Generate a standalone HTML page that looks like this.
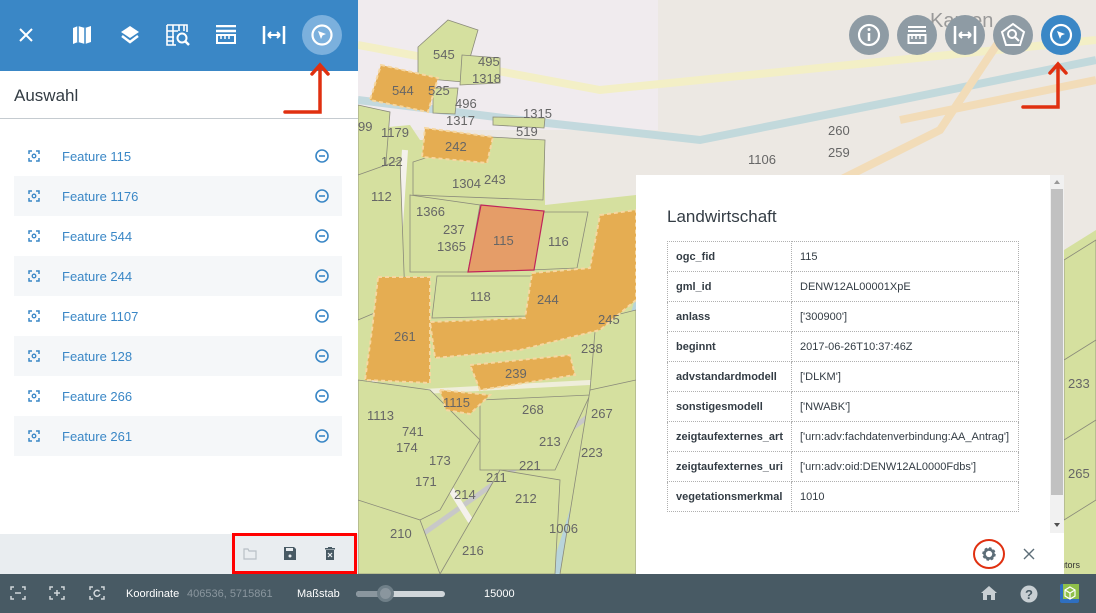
<!DOCTYPE html>
<html><head><meta charset="utf-8"><style>
*{box-sizing:border-box;margin:0;padding:0}
body{width:1096px;height:613px;overflow:hidden;font-family:"Liberation Sans",sans-serif;position:relative;background:#ece8e3}
#map{position:absolute;left:0;top:0}
#panel{position:absolute;left:0;top:0;width:358px;height:574px;background:#fff}
#hdr{height:71px;background:#3a87c6;position:relative}
#hdr svg{position:absolute}
#title{height:48px;border-bottom:1px solid #c5cbd0;font-size:17px;color:#333c44;padding:15px 14px}
.row{position:absolute;left:14px;width:328px;height:40px;font-size:13px;color:#3a87c6}
.row.alt{background:#f5f7f9}
.row span{position:absolute;left:48px;top:13px}
.row svg{position:absolute}
#pbot{position:absolute;left:0;top:534px;width:358px;height:40px;background:#e9edf0}
#redbox{position:absolute;left:232px;top:533px;width:125px;height:41px;border:3px solid #f00}
#foot{position:absolute;left:0;top:574px;width:1096px;height:39px;background:#485a64;color:#fff;font-size:11px}
#foot .t{position:absolute;top:14px}
#popup{position:absolute;left:636px;top:175px;width:428px;height:399px;background:#fff}
#popup h2{position:absolute;left:31px;top:32px;font-size:17px;font-weight:normal;color:#333c44}
table{position:absolute;left:31px;top:66px;border-collapse:collapse;font-size:11px;color:#333c44}
td{border:1px dotted #b0b0b0;height:30px;padding:0 8px}
td:first-child{font-weight:bold;width:124px}
td:last-child{width:227px}
.rb{position:absolute;border-radius:50%;width:40px;height:40px;background:#8e9ba4;top:15px}
</style></head><body>
<svg id="map" width="1096" height="613" viewBox="0 0 1096 613">
<rect width="1096" height="613" fill="#ece8e3"/>
<rect x="358" y="0" width="300" height="130" fill="#f0ebee"/>
<path d="M358 45 L600 90 L700 80 L1096 40" stroke="#f3efc6" stroke-width="8" fill="none"/>
<path d="M358 100 L520 120 L700 140 L900 100 L1096 60" stroke="#b8d4da" stroke-width="8" fill="none" opacity=".8"/>
<path d="M840 180 L940 130 L1000 40 M900 120 L1096 80" stroke="#f2dcb8" stroke-width="8" fill="none"/>
<polygon points="358,130 410,125 420,140 545,140 545,205 636,195 636,574 358,574" fill="#d5e09f"/>
<polygon points="1064,250 1096,230 1096,574 1064,574" fill="#d5e09f"/>
<path d="M640 300 L600 430 L555 574" stroke="#b8d4da" stroke-width="10" fill="none"/>
<path d="M358 580 L640 380" stroke="#c8c8c8" stroke-width="5" fill="none"/>
<path d="M405 150 L395 300 L365 420 M420 440 L470 520 L520 560" stroke="#f4f1ec" stroke-width="6" fill="none"/>
<path d="M358 395 L636 380" stroke="#efeedb" stroke-width="5" fill="none"/>
<!-- green parcels -->
<g fill="#d5e09f" stroke="#8a8a7a" stroke-width="0.8">
<polygon points="448,20 478,30 463,82 418,78 418,47"/>
<polygon points="462,55 500,58 500,83 460,85"/>
<polygon points="433,88 458,88 455,114 433,113"/>
<polygon points="493,117 545,118 544,128 493,125"/>
<polygon points="358,105 390,112 385,175 358,180"/>
<polygon points="490,137 545,140 543,200 413,195 413,162"/>
<polygon points="358,175 400,160 405,300 358,320"/>
<polygon points="410,195 480,205 468,272 410,272"/>
<polygon points="543,212 588,212 577,268 530,270"/>
<polygon points="437,276 532,276 526,316 432,318"/>
<polygon points="358,380 430,390 480,440 440,510 380,540 358,574"/>
<polygon points="480,400 590,395 555,470 480,470"/>
<polygon points="500,470 560,480 555,574 440,574"/>
<polygon points="358,500 420,520 440,574 358,574"/>
<polygon points="590,390 636,370 636,574 560,574"/>
<polygon points="596,320 636,310 636,380 590,390"/>
<polygon points="1064,260 1096,240 1096,500 1064,520"/>
<polygon points="1064,360 1096,340 1096,420 1064,440"/>
</g>
<g fill="#e5ad52" stroke="#f6d7a0" stroke-width="2" stroke-dasharray="4 3">
<polygon points="381,65 438,78 428,112 370,100"/>
<polygon points="425,128 493,137 487,163 422,157"/>
<polygon points="600,215 636,210 636,300 600,330 520,350 435,358 430,322 525,318 532,273 590,268"/>
<polygon points="378,277 430,277 430,383 365,380 372,330"/>
<polygon points="470,365 570,355 575,375 480,390"/>
<polygon points="440,390 490,395 470,414 446,410"/>
</g>
<polygon points="481,205 544,211 534,270 468,272" fill="#e59d68" stroke="#c0245a" stroke-width="1.2"/>
<g font-size="13" fill="#666" font-family="Liberation Sans">
<text x="433" y="59">545</text><text x="478" y="66">495</text><text x="472" y="83">1318</text>
<text x="392" y="95">544</text><text x="428" y="95">525</text><text x="455" y="108">496</text>
<text x="446" y="125">1317</text><text x="523" y="118">1315</text><text x="516" y="136">519</text>
<text x="358" y="131">99</text><text x="381" y="137">1179</text><text x="445" y="151">242</text>
<text x="381" y="166">122</text><text x="452" y="188">1304</text><text x="484" y="184">243</text>
<text x="371" y="201">112</text><text x="416" y="216">1366</text><text x="443" y="234">237</text>
<text x="437" y="251">1365</text><text x="493" y="245">115</text><text x="548" y="246">116</text>
<text x="470" y="301">118</text><text x="537" y="304">244</text><text x="598" y="324">245</text>
<text x="394" y="341">261</text><text x="581" y="353">238</text><text x="505" y="378">239</text>
<text x="443" y="407">1115</text><text x="522" y="414">268</text><text x="591" y="418">267</text>
<text x="367" y="420">1113</text><text x="402" y="436">741</text><text x="396" y="452">174</text>
<text x="429" y="465">173</text><text x="539" y="446">213</text><text x="581" y="457">223</text>
<text x="519" y="470">221</text><text x="415" y="486">171</text><text x="454" y="499">214</text>
<text x="486" y="482">211</text><text x="515" y="503">212</text><text x="390" y="538">210</text>
<text x="462" y="555">216</text><text x="549" y="533">1006</text><text x="1068" y="478">265</text>
<text x="828" y="135">260</text><text x="828" y="157">259</text><text x="748" y="164">1106</text>
<text x="1068" y="388">233</text>
</g>
<text x="930" y="27" font-size="20" fill="#999">Kamen</text>
<text x="1055" y="568" font-size="9" fill="#333">butors</text>
</svg>

<div id="panel">
<div id="hdr">
<svg style="left:17px;top:26px" width="18" height="18" viewBox="0 0 18 18"><path d="M3 3L15 15M15 3L3 15" stroke="#fff" stroke-width="2"/></svg>
<svg style="left:72px;top:25px" width="20" height="20" viewBox="0 0 20 20"><path d="M1 3L6 1L13 3L19 1V17L13 19L6 17L1 19Z" fill="#fff"/><path d="M6 1V17M13 3V19" stroke="#3a87c6" stroke-width="1.5"/></svg>
<svg style="left:119px;top:24px" width="22" height="22" viewBox="0 0 22 22"><path d="M11 2L20 8L11 14L2 8Z" fill="#fff"/><path d="M3 12L11 18L19 12" stroke="#fff" stroke-width="2.5" fill="none"/></svg>
<svg style="left:166px;top:24px" width="24" height="22" viewBox="0 0 24 22"><path d="M1 1H21V8M1 1V21H10M1 7H12M1 13H8M1 17H8M7 1V21M13 1V7M18 1V7" stroke="#fff" stroke-width="1.6" fill="none"/><circle cx="16" cy="14" r="4.5" stroke="#fff" stroke-width="2" fill="none"/><path d="M19 17L23 21" stroke="#fff" stroke-width="2.5"/></svg>
<svg style="left:215px;top:25px" width="22" height="20" viewBox="0 0 22 20"><path d="M1 1H21M1 6H21" stroke="#fff" stroke-width="2.5"/><rect x="2" y="10" width="18" height="8" stroke="#fff" stroke-width="2" fill="none"/><path d="M6 10V14M10 10V14M14 10V14" stroke="#fff" stroke-width="1.5"/></svg>
<svg style="left:262px;top:25px" width="24" height="20" viewBox="0 0 24 20"><path d="M2 1V19M22 1V19" stroke="#fff" stroke-width="2.5"/><path d="M6 10H18M6 10L9 7M6 10L9 13M18 10L15 7M18 10L15 13" stroke="#fff" stroke-width="2" fill="none"/></svg>
<div style="position:absolute;left:302px;top:15px;width:40px;height:40px;border-radius:50%;background:#7bb0dd"></div>
<svg style="left:310px;top:23px" width="24" height="24" viewBox="0 0 24 24"><circle cx="12" cy="12" r="9.5" stroke="#fff" stroke-width="2.2" fill="none"/><path d="M8 8L16 11L12.5 12.5L11 16Z" fill="#fff"/></svg>
</div>
<div id="title">Auswahl</div>
</div>
<svg style="position:absolute;left:282px;top:60px" width="50" height="56" viewBox="0 0 50 56"><path d="M3 52H38V6M30 14L38 5L46 14" stroke="#e03010" stroke-width="3.5" fill="none" stroke-linecap="round"/></svg>

<div class="row" style="top:136px"><svg style="left:14px;top:14px" width="12" height="12" viewBox="0 0 12 12"><path d="M1 4V1H4M8 1H11V4M11 8V11H8M4 11H1V8" stroke="#3a87c6" stroke-width="1.5" fill="none"/><circle cx="6" cy="6" r="1.8" stroke="#3a87c6" stroke-width="1.3" fill="none"/></svg><span>Feature 115</span><svg style="left:301px;top:13px" width="14" height="14" viewBox="0 0 14 14"><circle cx="7" cy="7" r="6" stroke="#3a87c6" stroke-width="1.6" fill="none"/><path d="M4 7H10" stroke="#3a87c6" stroke-width="1.6"/></svg></div>
<div class="row alt" style="top:176px"><svg style="left:14px;top:14px" width="12" height="12" viewBox="0 0 12 12"><path d="M1 4V1H4M8 1H11V4M11 8V11H8M4 11H1V8" stroke="#3a87c6" stroke-width="1.5" fill="none"/><circle cx="6" cy="6" r="1.8" stroke="#3a87c6" stroke-width="1.3" fill="none"/></svg><span>Feature 1176</span><svg style="left:301px;top:13px" width="14" height="14" viewBox="0 0 14 14"><circle cx="7" cy="7" r="6" stroke="#3a87c6" stroke-width="1.6" fill="none"/><path d="M4 7H10" stroke="#3a87c6" stroke-width="1.6"/></svg></div>
<div class="row" style="top:216px"><svg style="left:14px;top:14px" width="12" height="12" viewBox="0 0 12 12"><path d="M1 4V1H4M8 1H11V4M11 8V11H8M4 11H1V8" stroke="#3a87c6" stroke-width="1.5" fill="none"/><circle cx="6" cy="6" r="1.8" stroke="#3a87c6" stroke-width="1.3" fill="none"/></svg><span>Feature 544</span><svg style="left:301px;top:13px" width="14" height="14" viewBox="0 0 14 14"><circle cx="7" cy="7" r="6" stroke="#3a87c6" stroke-width="1.6" fill="none"/><path d="M4 7H10" stroke="#3a87c6" stroke-width="1.6"/></svg></div>
<div class="row alt" style="top:256px"><svg style="left:14px;top:14px" width="12" height="12" viewBox="0 0 12 12"><path d="M1 4V1H4M8 1H11V4M11 8V11H8M4 11H1V8" stroke="#3a87c6" stroke-width="1.5" fill="none"/><circle cx="6" cy="6" r="1.8" stroke="#3a87c6" stroke-width="1.3" fill="none"/></svg><span>Feature 244</span><svg style="left:301px;top:13px" width="14" height="14" viewBox="0 0 14 14"><circle cx="7" cy="7" r="6" stroke="#3a87c6" stroke-width="1.6" fill="none"/><path d="M4 7H10" stroke="#3a87c6" stroke-width="1.6"/></svg></div>
<div class="row" style="top:296px"><svg style="left:14px;top:14px" width="12" height="12" viewBox="0 0 12 12"><path d="M1 4V1H4M8 1H11V4M11 8V11H8M4 11H1V8" stroke="#3a87c6" stroke-width="1.5" fill="none"/><circle cx="6" cy="6" r="1.8" stroke="#3a87c6" stroke-width="1.3" fill="none"/></svg><span>Feature 1107</span><svg style="left:301px;top:13px" width="14" height="14" viewBox="0 0 14 14"><circle cx="7" cy="7" r="6" stroke="#3a87c6" stroke-width="1.6" fill="none"/><path d="M4 7H10" stroke="#3a87c6" stroke-width="1.6"/></svg></div>
<div class="row alt" style="top:336px"><svg style="left:14px;top:14px" width="12" height="12" viewBox="0 0 12 12"><path d="M1 4V1H4M8 1H11V4M11 8V11H8M4 11H1V8" stroke="#3a87c6" stroke-width="1.5" fill="none"/><circle cx="6" cy="6" r="1.8" stroke="#3a87c6" stroke-width="1.3" fill="none"/></svg><span>Feature 128</span><svg style="left:301px;top:13px" width="14" height="14" viewBox="0 0 14 14"><circle cx="7" cy="7" r="6" stroke="#3a87c6" stroke-width="1.6" fill="none"/><path d="M4 7H10" stroke="#3a87c6" stroke-width="1.6"/></svg></div>
<div class="row" style="top:376px"><svg style="left:14px;top:14px" width="12" height="12" viewBox="0 0 12 12"><path d="M1 4V1H4M8 1H11V4M11 8V11H8M4 11H1V8" stroke="#3a87c6" stroke-width="1.5" fill="none"/><circle cx="6" cy="6" r="1.8" stroke="#3a87c6" stroke-width="1.3" fill="none"/></svg><span>Feature 266</span><svg style="left:301px;top:13px" width="14" height="14" viewBox="0 0 14 14"><circle cx="7" cy="7" r="6" stroke="#3a87c6" stroke-width="1.6" fill="none"/><path d="M4 7H10" stroke="#3a87c6" stroke-width="1.6"/></svg></div>
<div class="row alt" style="top:416px"><svg style="left:14px;top:14px" width="12" height="12" viewBox="0 0 12 12"><path d="M1 4V1H4M8 1H11V4M11 8V11H8M4 11H1V8" stroke="#3a87c6" stroke-width="1.5" fill="none"/><circle cx="6" cy="6" r="1.8" stroke="#3a87c6" stroke-width="1.3" fill="none"/></svg><span>Feature 261</span><svg style="left:301px;top:13px" width="14" height="14" viewBox="0 0 14 14"><circle cx="7" cy="7" r="6" stroke="#3a87c6" stroke-width="1.6" fill="none"/><path d="M4 7H10" stroke="#3a87c6" stroke-width="1.6"/></svg></div>

<div id="pbot">
<svg style="position:absolute;left:243px;top:14px" width="14" height="12" viewBox="0 0 14 12"><path d="M1 1H5L6 3H13V11H1Z" stroke="#b8c0c6" stroke-width="1.2" fill="none"/></svg>
<svg style="position:absolute;left:284px;top:13px" width="12" height="13" viewBox="0 0 12 13"><path d="M0 0H10L12 2V13H0Z" fill="#485a64"/><rect x="2" y="1" width="7" height="3" fill="#e9edf0"/><circle cx="6" cy="9" r="1.5" fill="#e9edf0"/></svg>
<svg style="position:absolute;left:325px;top:13px" width="10" height="13" viewBox="0 0 10 13"><rect x="0" y="1" width="10" height="1.5" fill="#485a64"/><rect x="3" y="0" width="4" height="1.5" fill="#485a64"/><path d="M1 3H9V13H1Z" fill="#485a64"/><path d="M3 6L7 10M7 6L3 10" stroke="#e9edf0" stroke-width="1.2"/></svg>
</div>
<div id="redbox"></div>

<div id="popup">
<h2>Landwirtschaft</h2>
<table>
<tr><td>ogc_fid</td><td>115</td></tr>
<tr><td>gml_id</td><td>DENW12AL00001XpE</td></tr>
<tr><td>anlass</td><td>['300900']</td></tr>
<tr><td>beginnt</td><td>2017-06-26T10:37:46Z</td></tr>
<tr><td>advstandardmodell</td><td>['DLKM']</td></tr>
<tr><td>sonstigesmodell</td><td>['NWABK']</td></tr>
<tr><td>zeigtaufexternes_art</td><td>['urn:adv:fachdatenverbindung:AA_Antrag']</td></tr>
<tr><td>zeigtaufexternes_uri</td><td>['urn:adv:oid:DENW12AL0000Fdbs']</td></tr>
<tr><td>vegetationsmerkmal</td><td>1010</td></tr>
</table>
<div style="position:absolute;left:414px;top:0;width:14px;height:358px;background:#f1f1f1"></div>
<div style="position:absolute;left:415px;top:14px;width:12px;height:306px;background:#c1c1c1"></div>
<div style="position:absolute;left:418px;top:5px;border:3px solid transparent;border-bottom:4px solid #999;border-top:0"></div>
<div style="position:absolute;left:418px;top:348px;border:3px solid transparent;border-top:4px solid #505050;border-bottom:0"></div>
<svg style="position:absolute;left:335px;top:362px" width="36" height="34" viewBox="0 0 36 34"><ellipse cx="18" cy="17" rx="15" ry="14" stroke="#e03010" stroke-width="2" fill="none"/><circle cx="18" cy="17" r="5" stroke="#5d6e78" stroke-width="3.5" stroke-dasharray="2.2 1.7" fill="none"/><circle cx="18" cy="17" r="4.5" stroke="#5d6e78" stroke-width="2.5" fill="none"/></svg>
<svg style="position:absolute;left:387px;top:373px" width="12" height="12" viewBox="0 0 12 12"><path d="M1 1L11 11M11 1L1 11" stroke="#5d6e78" stroke-width="1.4"/></svg>
</div>

<div class="rb" style="left:849px"><svg width="40" height="40" viewBox="0 0 40 40"><circle cx="20" cy="20" r="10" stroke="#fff" stroke-width="2.2" fill="none"/><path d="M20 18V26" stroke="#fff" stroke-width="2.5"/><circle cx="20" cy="14.5" r="1.5" fill="#fff"/></svg></div>
<div class="rb" style="left:897px"><svg width="40" height="40" viewBox="0 0 40 40"><path d="M11 12H29M11 16H29" stroke="#fff" stroke-width="2"/><rect x="11.5" y="20" width="17" height="8" stroke="#fff" stroke-width="2" fill="none"/><path d="M15 20V24M19 20V24M23 20V24" stroke="#fff" stroke-width="1.5"/></svg></div>
<div class="rb" style="left:945px"><svg width="40" height="40" viewBox="0 0 40 40"><path d="M10 11V29M30 11V29" stroke="#fff" stroke-width="2.5"/><path d="M14 20H26M14 20L17 17M14 20L17 23M26 20L23 17M26 20L23 23" stroke="#fff" stroke-width="2" fill="none"/></svg></div>
<div class="rb" style="left:993px"><svg width="40" height="40" viewBox="0 0 40 40"><path d="M20 9L31 17L27 30H13L9 17Z" stroke="#fff" stroke-width="2" fill="none"/><circle cx="19" cy="19" r="4" stroke="#fff" stroke-width="2" fill="none"/><path d="M22 22L26 26" stroke="#fff" stroke-width="2.2"/></svg></div>
<div class="rb" style="left:1041px;background:#3a87c6"><svg width="40" height="40" viewBox="0 0 40 40"><circle cx="20" cy="20" r="10" stroke="#fff" stroke-width="2.2" fill="none"/><path d="M16 16L24 19L20.5 20.5L19 24Z" fill="#fff"/></svg></div>
<svg style="position:absolute;left:1020px;top:60px" width="50" height="52" viewBox="0 0 50 52"><path d="M3 47H38V5M30 13L38 4L46 13" stroke="#e03010" stroke-width="3.5" fill="none" stroke-linecap="round"/></svg>

<div id="foot">
<svg style="position:absolute;left:10px;top:12px" width="16" height="14" viewBox="0 0 16 14"><path d="M1 4V1H4M12 1H15V4M15 10V13H12M4 13H1V10M5 7H11" stroke="#d0d6da" stroke-width="1.5" fill="none"/></svg>
<svg style="position:absolute;left:49px;top:12px" width="16" height="14" viewBox="0 0 16 14"><path d="M1 4V1H4M12 1H15V4M15 10V13H12M4 13H1V10M5 7H11M8 4V10" stroke="#d0d6da" stroke-width="1.5" fill="none"/></svg>
<svg style="position:absolute;left:89px;top:12px" width="16" height="14" viewBox="0 0 16 14"><path d="M1 4V1H4M12 1H15V4M15 10V13H12M4 13H1V10" stroke="#d0d6da" stroke-width="1.5" fill="none"/><path d="M10.5 5.5A3 3 0 1 0 11 8" stroke="#d0d6da" stroke-width="1.5" fill="none"/></svg>
<span class="t" style="left:126px">Koordinate</span>
<span class="t" style="left:187px;color:#8a969e">406536, 5715861</span>
<span class="t" style="left:297px">Maßstab</span>
<div style="position:absolute;left:356px;top:17px;width:89px;height:6px;border-radius:3px;background:#d0d6da"></div>
<div style="position:absolute;left:356px;top:17px;width:30px;height:6px;border-radius:3px;background:#8a969e"></div>
<div style="position:absolute;left:377px;top:11px;width:17px;height:17px;border-radius:50%;background:#8a969e;border:3px solid #6f7f88"></div>
<span class="t" style="left:484px">15000</span>
<svg style="position:absolute;left:980px;top:11px" width="18" height="16" viewBox="0 0 18 16"><path d="M9 1L17 8H15V15H11V10H7V15H3V8H1Z" fill="#c8cfd3"/></svg>
<svg style="position:absolute;left:1020px;top:11px" width="18" height="18" viewBox="0 0 18 18"><circle cx="9" cy="9" r="8.5" fill="#c8cfd3"/><text x="9" y="14" font-size="13" font-weight="bold" fill="#485a64" text-anchor="middle" font-family="Liberation Sans">?</text></svg>
<svg style="position:absolute;left:1060px;top:10px" width="19" height="19" viewBox="0 0 19 19"><rect width="19" height="19" rx="2" fill="#2f6fc0"/><rect x="3" y="0" width="16" height="15" fill="#8fc04a"/><path d="M10 3L15 6V12L10 15L5 12V6Z" stroke="#fff" stroke-width="1.2" fill="none"/><path d="M5 6L10 9L15 6M10 9V15" stroke="#fff" stroke-width="1.2" fill="none"/></svg>
</div>
</body></html>
